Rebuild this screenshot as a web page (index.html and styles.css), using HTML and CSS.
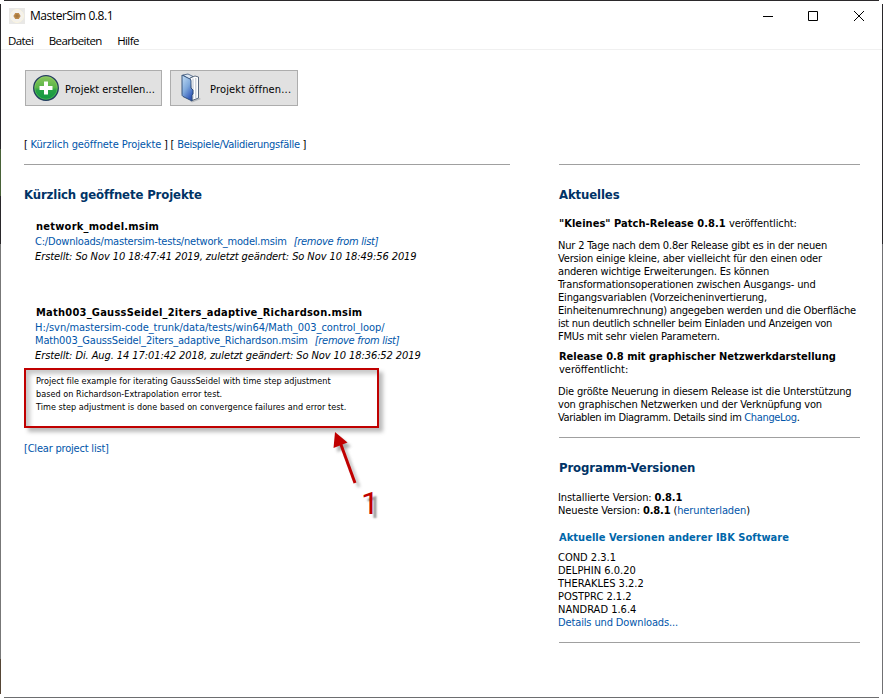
FILE: index.html
```html
<!DOCTYPE html>
<html lang="de">
<head>
<meta charset="utf-8">
<title>MasterSim 0.8.1</title>
<link rel="stylesheet" href="styles.css">
</head>
<body>
<div class="window">
  <header class="titlebar">
    <svg class="app-icon" width="16" height="16" viewBox="0 0 16 16"><rect width="16" height="16" fill="#e9e8e6"/><circle cx="8" cy="8" r="6.500" fill="#f4f2ee" stroke="#fbf5e0" stroke-width="1"/><path d="M6.200 5h3.600l1.800 3-1.800 3H6.200L4.400 8z" fill="#bd8a4c"/><circle cx="8" cy="8" r="1.800" fill="#a6783f"/></svg>
    <span class="title">MasterSim 0.8.1</span>
    <svg class="controls" width="104" height="12" viewBox="0 0 104 12" fill="none" stroke="#000"><path d="M1 6.500h10M46.500 1.500h9v9h-9zM92 1l10 10M102 1L92 11"/></svg>
  </header>
  <nav class="menu"><span>Datei</span><span>Bearbeiten</span><span>Hilfe</span></nav>
  <main class="content">
    <div class="buttons">
      <button class="btn create">
        <svg width="28" height="28" viewBox="0 0 28 28"><defs><linearGradient id="green" x2="0" y2="1"><stop stop-color="#8cc65e"/><stop offset=".48" stop-color="#5ab548"/><stop offset=".6" stop-color="#25a044"/><stop offset="1" stop-color="#109743"/></linearGradient></defs><circle cx="14" cy="14" r="12.300" fill="url(#green)" stroke="#243c60" stroke-width="1.300"/><circle cx="14" cy="14" r="11.200" fill="none" stroke="#9ed36d" stroke-opacity=".5" stroke-width=".7"/><path d="M12 7.500h4V12h4.500v4H16v4.500h-4V16H7.500v-4H12z" fill="#fff"/></svg>
        <span>Projekt erstellen...</span>
      </button>
      <button class="btn open">
        <svg width="24" height="30" viewBox="0 0 24 30"><defs><linearGradient id="blue" x2=".6" y2="1"><stop stop-color="#c3def5"/><stop offset=".55" stop-color="#7fa9dc"/><stop offset="1" stop-color="#2f56b8"/></linearGradient></defs><path d="M10 28l9-3 2 1-9 3.500z" fill="#8c9199" opacity=".5"/><path d="M3 2l5-1 5 2.500-4 3z" fill="#dce7f3" stroke="#3d5578" stroke-width=".8"/><path d="M10 5l5-2 3.500 1v21L12 27.500z" fill="#fff" stroke="#4b5b73" stroke-width=".9"/><path d="M13 5.500v20M15.800 5v20" stroke="#a3b0c3" stroke-width=".8"/><path d="M2 2l8 4q1 .5 1 2v7l2 2v4l-1 1v6L3 23.500q-1-.5-1-2z" fill="url(#blue)" stroke="#294873" stroke-width=".9"/></svg>
        <span>Projekt öffnen...</span>
      </button>
    </div>
    <p class="jump">[ <a>Kürzlich geöffnete Projekte</a> ] [ <a class="examples">Beispiele/Validierungsfälle</a> ]</p>
    <div class="columns">
      <section class="recent">
        <h2>Kürzlich geöffnete Projekte</h2>
        <article class="project first">
          <h3>network_model.msim</h3>
          <p><a class="path">C:/Downloads/mastersim-tests/network_model.msim</a><a class="remove">[remove from list]</a></p>
          <p class="dates">Erstellt: So Nov 10 18:47:41 2019, zuletzt geändert: So Nov 10 18:49:56 2019</p>
        </article>
        <article class="project">
          <h3>Math003_GaussSeidel_2iters_adaptive_Richardson.msim</h3>
          <p><a class="folder">H:/svn/mastersim-code_trunk/data/tests/win64/Math_003_control_loop/</a><br><a class="file">Math003_GaussSeidel_2iters_adaptive_Richardson.msim</a><a class="remove">[remove from list]</a></p>
          <p class="dates">Erstellt: Di. Aug. 14 17:01:42 2018, zuletzt geändert: So Nov 10 18:36:52 2019</p>
        </article>
        <div class="description">
          Project file example for iterating GaussSeidel with time step adjustment<br>
          based on Richardson-Extrapolation error test.<br>
          Time step adjustment is done based on convergence failures and error test.
          <svg class="arrow" width="60" height="70" viewBox="0 0 60 70"><g class="arrow-shadow"><path d="M14 16l16 43" stroke="#999" stroke-width="3"/><path d="M9 8l13 10.500-14 5.500z" fill="#777"/></g><path d="M11 14l15 41" stroke="#c00000" stroke-width="3"/><path d="M6 4l12.500 10.500L4.500 20z" fill="#c00000"/></svg>
          <span class="marker">1</span>
        </div>
        <p class="clear"><a>[Clear project list]</a></p>
      </section>
      <aside class="info">
        <section class="news">
          <h2>Aktuelles</h2>
          <p class="headline"><b class="patch">"Kleines" Patch-Release 0.8.1</b> <span class="published">veröffentlicht:</span></p>
          <p class="body">Nur 2 Tage nach dem 0.8er Release gibt es in der neuen<br>Version einige kleine, aber vielleicht für den einen oder<br>anderen wichtige Erweiterungen. Es können<br><span class="loose">Transformationsoperationen zwischen Ausgangs- und</span><br>Eingangsvariablen (Vorzeicheninvertierung,<br><span class="snug">Einheitenumrechnung) angegeben werden und die Oberfläche</span><br><span class="tight">ist nun deutlich schneller beim Einladen und Anzeigen von</span><br>FMUs mit sehr vielen Parametern.</p>
          <p class="headline"><b>Release 0.8 mit graphischer Netzwerkdarstellung</b><br>veröffentlicht:</p>
          <p class="body">Die größte Neuerung in diesem Release ist die Unterstützung<br>von graphischen Netzwerken und der Verknüpfung von<br><span class="tighter">Variablen im Diagramm. Details sind im <a>ChangeLog</a>.</span></p>
        </section>
        <section class="versions">
          <h2>Programm-Versionen</h2>
          <p class="body">Installierte Version: <b>0.8.1</b><br><span class="latest">Neueste Version: <b>0.8.1</b> (<a>herunterladen</a>)</span></p>
          <h3>Aktuelle Versionen anderer IBK Software</h3>
          <p class="body list">COND 2.3.1<br>DELPHIN 6.0.20<br>THERAKLES 3.2.2<br>POSTPRC 2.1.2<br>NANDRAD 1.6.4<br><a>Details und Downloads...</a></p>
        </section>
      </aside>
    </div>
  </main>
</div>
</body>
</html>
```
FILE: styles.css
```css
* { box-sizing: border-box; }
body { margin: 0; background: #fff; }
h2, h3, p { margin: 0; }

.window {
  width: 883px;
  height: 698px;
  overflow: hidden;
  display: flex;
  flex-direction: column;
  color: #000;
  font: 11px/13px "DejaVu Sans Condensed", "DejaVu Sans", sans-serif;
  font-stretch: condensed;
  white-space: nowrap;
  background:
    linear-gradient(#2b292b, #2b292b) 4px 0 / 875px 1px no-repeat,
    linear-gradient(#29272a 0 145px, #476137 145px 192px, #29272a 192px 240px, #777 240px 655px, #554535 655px) 0 4px / 1px 690px no-repeat,
    linear-gradient(#29272a 0 240px, #707073 240px) 882px 4px / 1px 690px no-repeat,
    linear-gradient(#6d6e70, #6d6e70) 4px 697px / 875px 1px no-repeat,
    #fff;
}

.titlebar { height: 31px; display: flex; align-items: center; padding: 0 17px 0 9px; font: 12px/16px "Open Sans", sans-serif; }
.app-icon { margin-right: 5px; }
.title { letter-spacing: -.45px; }
.controls { margin-left: auto; }
.menu { height: 19px; margin: 0 1px; border-bottom: 1px solid #f0f0f0; display: flex; gap: 15.500px; padding: 2px 0 0 7px; font: 11.500px/16px "Open Sans", sans-serif; letter-spacing: -.6px; }

.content { padding: 20px 23px 0 24px; }
.buttons { display: flex; gap: 8px; margin-left: 1px; }
.btn { height: 36px; margin: 0; border: 1px solid #adadad; background: #e1e1e1; color: #000; display: flex; align-items: center; font: inherit; line-height: 16px; white-space: nowrap; }
.btn span { padding-top: 3px; }
.create { width: 137px; padding: 0 0 0 6px; gap: 5px; }
.open { width: 128px; padding: 0 0 0 9px; gap: 6px; letter-spacing: .17px; }
.jump { margin-top: 32px; letter-spacing: -.08px; word-spacing: -.3px; }
.jump a { word-spacing: 0; }
.examples { letter-spacing: -.27px; }
a { color: #0055aa; }

.columns { display: grid; grid-template-columns: 486px 301px; column-gap: 49px; margin-top: 13px; }
.recent, .news, .versions { border-top: 1px solid #a0a0a0; padding-top: 22px; }
h2 { font-size: 13px; line-height: 15px; color: #003366; letter-spacing: -.12px; }
h3 { font-size: 11px; line-height: 13px; letter-spacing: .24px; }

.project { padding-left: 12px; margin-top: 43px; display: flex; flex-direction: column; gap: 2px; }
.project.first { margin-top: 18px; }
.project p { margin-left: -1px; }
.path { letter-spacing: -.2px; }
.folder { letter-spacing: -.045px; }
.file { letter-spacing: -.16px; }
.remove { font-style: italic; margin-left: 7px; letter-spacing: -.28px; }
.dates { font-style: italic; letter-spacing: -.09px; }

.description { position: relative; width: 355px; height: 60px; margin-top: 6px; padding: 5px 10px; border: 2px solid #c00000; font-size: 9px; letter-spacing: .035px; box-shadow: 4px 4px 4px #bbb, inset 4px 4px 4px #c8c8c8; }
.arrow { position: absolute; left: 303px; top: 58px; overflow: visible; }
.arrow-shadow { filter: blur(1.500px); opacity: .6; }
.marker { position: absolute; left: 335px; top: 116px; color: #c00000; font: 32px/34px Roboto, sans-serif; text-shadow: 4px 4px 2px #999; }
.clear { margin-top: 14px; letter-spacing: -.2px; }

.news { height: 273px; }
.news .headline { margin-top: 15px; }
.news .body { margin: 9px 0 0 -1px; letter-spacing: -.18px; }
.news .body + .headline { margin-top: 7px; }
.patch { letter-spacing: .05px; }
.published { letter-spacing: -.1px; }
.loose { letter-spacing: -.14px; }
.snug { letter-spacing: -.21px; }
.tight { letter-spacing: -.29px; }
.tighter { letter-spacing: -.35px; }
.versions .body { margin: 16px 0 0 -1px; letter-spacing: -.09px; }
.latest { letter-spacing: -.12px; }
.versions h3 { margin-top: 14px; color: #0066aa; letter-spacing: .03px; }
.versions .list { margin-top: 7px; letter-spacing: 0; }
.list a { letter-spacing: -.13px; }
.versions { height: 206px; border-bottom: 1px solid #a0a0a0; }
```
